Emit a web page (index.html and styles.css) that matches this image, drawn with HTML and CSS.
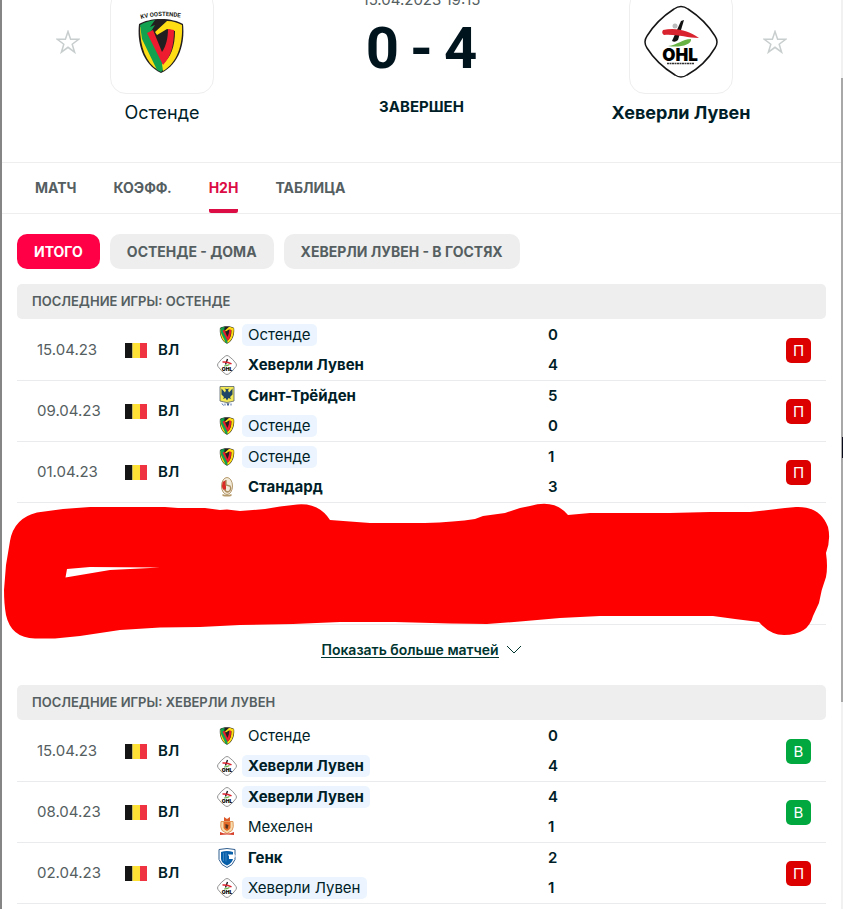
FILE: index.html
```html
<!DOCTYPE html>
<html lang="ru">
<head>
<meta charset="utf-8">
<title>Остенде - Хеверли Лувен</title>
<link rel="stylesheet" href="styles.css">
</head>
<body>
<svg class="defs" aria-hidden="true">
  <symbol id="star" viewBox="0 0 24 24"><path d="M12 1.500l2.600 7.800h8.100l-6.500 4.900 2.400 8-6.600-4.900-6.600 4.900 2.400-8L1.300 9.300h8.100z" fill="none" stroke="#c8cdcd" stroke-width="1.500"/></symbol>
  <symbol id="oostende" viewBox="0 0 48 56">
    <path d="M24 1C15 1 7 3 2 6 0 24 5 46 24 55 43 46 48 24 46 6 41 3 33 1 24 1z" fill="#231f20"/>
    <path d="M3 9l7-4-2 9 13 38C9 45 3 29 3 9z" fill="#ffdd15"/>
    <path d="M3 7c5-3 10-4 15-5l-5 7 5-2-5 8 15 35-4 4-4-2L5 21z" fill="#12a14f"/>
    <path d="M18 14L30 3c6 0 11 2 15 4 1 20-5 38-19 46l-1-7c9-6 13-18 13-33l-8-2-10 6z" fill="#ffdd15"/>
    <path d="M10 15l6-3 9 22c4-6 6-14 6-23l6 1c0 15-3 27-11 35z" fill="#ed1c2e"/>
  </symbol>
  <symbol id="ohl" viewBox="0 0 74 74">
    <path d="M30 4q7-5 14 0Q61 15 71 31q4 6 0 12Q61 60 43 70q-6 4-12 0Q13 59 3 43q-4-6 0-12Q13 15 30 4z" fill="#fff" stroke="#161616" stroke-width="1.500"/>
    <circle cx="31" cy="21" r="2.500" fill="#bbb"/>
    <path d="M37 16l3-1-6 20q-3 3-6 1z" fill="#111"/>
    <path d="M19 25c14-3 26 1 36 8-12 0-22-4-35-3q-3-2-1-5z" fill="#d9232e"/>
    <path d="M24 41c10-1 14-7 23-7 1 6-12 9-23 7z" fill="#69b345"/>
    <text x="36" y="56" text-anchor="middle" class="ohl-name">OHL</text>
    <path d="M23 58.500h27" stroke="#333" stroke-width="1.500" stroke-dasharray="2 .5"/>
  </symbol>
  <symbol id="ohl-small" viewBox="0 0 20 20">
    <path d="M8.500 1q1.500-1 3 0Q16 4 19 8.500q1 1.500 0 3Q16 16 11.500 19q-1.500 1-3 0Q4 16 1 11.500q-1-1.500 0-3Q4 4 8.500 1z" fill="#fff" stroke="#777" stroke-width=".8"/>
    <path d="M10.500 4L8.500 9.500" stroke="#111" stroke-width="1.300"/>
    <path d="M5.500 7q5-.5 9 1.800" stroke="#d9232e" stroke-width="1.500" fill="none"/>
    <path d="M7 11q3 0 5.500-1.500" stroke="#69b345" stroke-width="1.200" fill="none"/>
    <text x="10" y="15.500" text-anchor="middle" class="ohl-mini">OHL</text>
  </symbol>
  <symbol id="stvv" viewBox="0 0 20 20">
    <path d="M3 .5h14V15q-4 1-7 1.500Q7 16 3 15z" fill="#f5ea55" stroke="#54606a" stroke-width=".8"/>
    <path d="M4.500 2.500l3.500 4 1-2.500-1.500-1.500L10 3l2.500-.5L11 4l1 2.500 3.500-4v6L13 11l1 2-2.500-1L10 14.500 8.500 12 6 13l1-2-2.500-2.500z" fill="#1f4566"/>
    <path d="M5 17.500l1.500 2M8 17.500v2M10 17.500l1 2 1-2M14 17.500v2" stroke="#4060a0" stroke-width=".9"/>
  </symbol>
  <symbol id="standard" viewBox="0 0 20 20">
    <ellipse cx="10" cy="9" rx="5.500" ry="8.500" fill="#f3ead9" stroke="#b59a6c" stroke-width="1"/>
    <path d="M5.500 5L9 3v11q-4-1-4-5z" fill="#d92b25"/>
    <path d="M9 3v5l4 1q2 4-2 6-3 0-3-3" fill="none" stroke="#a98d5e" stroke-width="1.300"/>
    <path d="M5.500 17q4.500 2 9 0v2q-4.500 1-9 0z" fill="#b59a6c"/>
  </symbol>
  <symbol id="mechelen" viewBox="0 0 20 20">
    <path d="M7 0l3 2 3-2v4H7z" fill="#dd5a2b"/>
    <path d="M4 4.500h12q1 6-1 9l-5 3-5-3q-2-3-1-9z" fill="#f6ddb0" stroke="#e2995c"/>
    <path d="M6.500 5h7v6q-1 2-3.500 3-2.500-1-3.500-3z" fill="#e46a27"/>
    <path d="M8.500 7l3 1-1 4-2-1z" fill="#52331f"/>
    <path d="M3 15q7 3 14 0v3q-7-1-14 0z" fill="#d6412b"/>
  </symbol>
  <symbol id="genk" viewBox="0 0 20 20">
    <path d="M2 1.500Q10-.5 18 1.500v10q-2 6-8 8-6-2-8-8z" fill="#fff" stroke="#315f91" stroke-width="1"/>
    <path d="M4 4q6-2 12 0v3h-4v4h4q-1 4-6 6.500Q4.500 15 4 11z" fill="#075ea9"/>
    <path d="M11 7h7v2h-5v2" fill="none" stroke="#fff" stroke-width="1"/>
    <path d="M6.500 5v8M9 4.500v9" stroke="#4a91cc" stroke-width=".8"/>
  </symbol>
  <symbol id="flag" viewBox="0 0 22 15"><path d="M0 0h7.500v15H0z" fill="#151515"/><path d="M7.500 0H15v15H7.500z" fill="#ffe135"/><path d="M15 0h7v15h-7z" fill="#ef3340"/></symbol>
</svg>

<div class="page">
  <header class="match">
    <button class="star" aria-label="В избранное"><svg><use href="#star"/></svg></button>
    <a class="team" href="#">
      <span class="crest">
        <svg class="crest-oostende" viewBox="0 0 50 66">
          <path id="arc" d="M4 10Q25 4 50 10" fill="none"/>
          <text class="kv"><textPath href="#arc">KV OOSTENDE</textPath></text>
          <use href="#oostende" x="0" y="9" width="48" height="56"/>
        </svg>
      </span>
      <span>Остенде</span>
    </a>
    <div class="result">
      <div class="when">15.04.2023 19:15</div>
      <div class="score"><span>0</span><span>-</span><span>4</span></div>
      <div class="status">ЗАВЕРШЕН</div>
    </div>
    <a class="team winner" href="#">
      <span class="crest"><svg class="crest-ohl"><use href="#ohl"/></svg></span>
      <span>Хеверли Лувен</span>
    </a>
    <button class="star" aria-label="В избранное"><svg><use href="#star"/></svg></button>
  </header>

  <nav class="tabs">
    <a href="#">МАТЧ</a>
    <a href="#">КОЭФФ.</a>
    <a href="#" class="active">H2H</a>
    <a href="#">ТАБЛИЦА</a>
  </nav>

  <main>
    <div class="filters">
      <button class="active">ИТОГО</button>
      <button>ОСТЕНДЕ - ДОМА</button>
      <button>ХЕВЕРЛИ ЛУВЕН - В ГОСТЯХ</button>
    </div>

    <section>
      <h2>ПОСЛЕДНИЕ ИГРЫ: ОСТЕНДЕ</h2>
      <table>
        <colgroup><col class="c-date"><col class="c-league"><col><col class="c-goals"><col class="c-form"></colgroup>
        <tr>
          <td class="date">15.04.23</td>
          <td><span class="league"><svg><use href="#flag"/></svg>ВЛ</span></td>
          <td><div class="side"><svg class="narrow"><use href="#oostende"/></svg><span class="name own">Остенде</span></div><div class="side won"><svg><use href="#ohl-small"/></svg><span class="name">Хеверли Лувен</span></div></td>
          <td class="goals"><div>0</div><div>4</div></td>
          <td><span class="form loss">П</span></td>
        </tr>
        <tr>
          <td class="date">09.04.23</td>
          <td><span class="league"><svg><use href="#flag"/></svg>ВЛ</span></td>
          <td><div class="side won"><svg><use href="#stvv"/></svg><span class="name">Синт-Трёйден</span></div><div class="side"><svg class="narrow"><use href="#oostende"/></svg><span class="name own">Остенде</span></div></td>
          <td class="goals"><div>5</div><div>0</div></td>
          <td><span class="form loss">П</span></td>
        </tr>
        <tr>
          <td class="date">01.04.23</td>
          <td><span class="league"><svg><use href="#flag"/></svg>ВЛ</span></td>
          <td><div class="side"><svg class="narrow"><use href="#oostende"/></svg><span class="name own">Остенде</span></div><div class="side won"><svg><use href="#standard"/></svg><span class="name">Стандард</span></div></td>
          <td class="goals"><div>1</div><div>3</div></td>
          <td><span class="form loss">П</span></td>
        </tr>
      </table>
      <div class="covered">
        <svg viewBox="4 503 826 136" preserveAspectRatio="none" aria-hidden="true">
          <path fill="red" fill-rule="evenodd" d="M37 512.500L63 509Q76 508 90 507L165 507 178 508H205L220 510 227 509.500 240 511 265 509 280 506.500 293 505Q318 501 330 520L370 523H425Q455 522 475 519L483 516 505 513 520 508 530 506Q555 499 568 515L590 513H670L710 512H750L785 508 796 507Q820 506 828 527Q831 540 826 553Q828 567 826 577Q821 590 819 603L813 616Q808 635 784 635Q770 635 759 622L735 619 713 616H600L560 618 520 621.500 487 624 450 623.500 395 622H340L293 624 240 625 200 627 160 627.500 120 630 80 636 55 638.500H35Q11 638 6 615Q4 604 4 590L6 565 10 541Q14 518 37 512.500zM67 569L65.500 577.500 110 570 160 567.500 90 567z"/>
        </svg>
      </div>
      <a class="more" href="#"><span>Показать больше матчей</span><svg viewBox="0 0 16 10"><path d="M1 1l7 7 7-7" fill="none" stroke="#00352f"/></svg></a>
    </section>

    <section>
      <h2>ПОСЛЕДНИЕ ИГРЫ: ХЕВЕРЛИ ЛУВЕН</h2>
      <table>
        <colgroup><col class="c-date"><col class="c-league"><col><col class="c-goals"><col class="c-form"></colgroup>
        <tr>
          <td class="date">15.04.23</td>
          <td><span class="league"><svg><use href="#flag"/></svg>ВЛ</span></td>
          <td><div class="side"><svg class="narrow"><use href="#oostende"/></svg><span class="name">Остенде</span></div><div class="side won"><svg><use href="#ohl-small"/></svg><span class="name own">Хеверли Лувен</span></div></td>
          <td class="goals"><div>0</div><div>4</div></td>
          <td><span class="form win">В</span></td>
        </tr>
        <tr>
          <td class="date">08.04.23</td>
          <td><span class="league"><svg><use href="#flag"/></svg>ВЛ</span></td>
          <td><div class="side won"><svg><use href="#ohl-small"/></svg><span class="name own">Хеверли Лувен</span></div><div class="side"><svg><use href="#mechelen"/></svg><span class="name">Мехелен</span></div></td>
          <td class="goals"><div>4</div><div>1</div></td>
          <td><span class="form win">В</span></td>
        </tr>
        <tr>
          <td class="date">02.04.23</td>
          <td><span class="league"><svg><use href="#flag"/></svg>ВЛ</span></td>
          <td><div class="side won"><svg><use href="#genk"/></svg><span class="name">Генк</span></div><div class="side"><svg><use href="#ohl-small"/></svg><span class="name own">Хеверли Лувен</span></div></td>
          <td class="goals"><div>2</div><div>1</div></td>
          <td><span class="form loss">П</span></td>
        </tr>
        <tr>
          <td></td><td></td>
          <td><div class="side"><svg></svg><span class="name own next"></span></div></td>
          <td></td><td></td>
        </tr>
      </table>
    </section>
  </main>
</div>
<div class="scrollbar"><div class="thumb"></div><div class="mark"></div></div>
</body>
</html>
```
FILE: styles.css
```css
* { box-sizing: border-box; }
body {
  margin: 0;
  height: 100vh;
  overflow: hidden;
  display: flex;
  background: #fff;
  color: #001e28;
  font: 15px/20px Inter, sans-serif;
}
a { color: inherit; text-decoration: none; }
button { border: 0; background: none; padding: 0; font: inherit; color: inherit; cursor: pointer; }
svg { display: block; }
.defs { position: absolute; width: 0; height: 0; }
.page {
  flex: 1;
  min-width: 0;
  border-left: 2px solid #858585;
}

/* Match header */
.match {
  display: grid;
  grid-template-columns: 24px 164px 1fr 164px 24px;
  margin-top: -10px;
  padding: 0 54px;
  height: 173px;
  border-bottom: 1px solid #eee;
}
.star { align-self: start; margin-top: 40px; }
.star svg { width: 24px; height: 24px; }
.team {
  display: flex;
  flex-direction: column;
  align-items: center;
  gap: 7px;
  font-size: 18px;
  line-height: 24px;
  white-space: nowrap;
}
.winner { font-weight: 700; }
.crest {
  display: grid;
  place-items: center;
  width: 104px;
  height: 104px;
  border: 1px solid #eee;
  border-radius: 16px;
}
.crest-oostende { width: 50px; height: 66px; overflow: visible; }
.crest-ohl { width: 74px; height: 74px; }
.kv { font: 700 6px Roboto, sans-serif; fill: #231f20; }
.ohl-name { font: 900 17px Inter, sans-serif; fill: #000; }
.ohl-mini { font: 900 5px Inter, sans-serif; fill: #000; }
.result { text-align: center; }
.when { color: #555e61; line-height: 20px; }
.score {
  display: flex;
  justify-content: center;
  gap: 11px;
  margin-top: 8px;
  color: #00141e;
  font: 700 58px/60px Roboto, sans-serif;
}
.status { margin-top: 18px; font-size: 15px; font-weight: 700; line-height: 22px; }

/* Tabs */
.tabs {
  display: flex;
  gap: 37px;
  height: 51px;
  padding: 0 33px;
  border-bottom: 1px solid #eee;
  color: #555e61;
  font-size: 14px;
  font-weight: 700;
}
.tabs a { padding-top: 15px; }
.tabs .active { color: #dc0c45; border-bottom: 4px solid #dc0c45; border-radius: 2px; }

main { padding: 20px 15px 0; }
.filters { display: flex; gap: 10px; margin-bottom: 15px; }
.filters button {
  height: 35px;
  padding: 0 17px;
  border-radius: 10px;
  background: #eee;
  color: #555e61;
  font-size: 14px;
  font-weight: 700;
  white-space: nowrap;
}
.filters .active { background: #ff0046; color: #fff; }

/* Recent games */
h2 {
  margin: 0 0 1px;
  padding: 0 15px;
  border-radius: 5px;
  background: #eee;
  color: #555e61;
  font-size: 13px;
  font-weight: 600;
  line-height: 35px;
}
table { width: 100%; table-layout: fixed; border-collapse: separate; border-spacing: 0; }
.c-date { width: 108px; }
.c-league { width: 92px; }
.c-goals { width: 150px; }
.c-form { width: 128px; }
td { height: 61px; padding: 0; border-bottom: 1px solid #e9ebec; }
.date { padding-left: 20px; color: #555e61; }
.league { display: flex; align-items: center; gap: 11px; font-weight: 600; }
.league svg { width: 22px; height: 15px; }
.side { display: flex; align-items: center; gap: 5px; height: 30px; }
.side svg { width: 20px; height: 20px; }
.side .narrow { padding: 1px 2px; }
.name { padding: 0 6px; border-radius: 5px; line-height: 22px; }
.own { background: #ecf5ff; }
.next { width: 124px; height: 22px; }
.won { font-weight: 700; }
.goals { font-weight: 600; line-height: 30px; }
.form {
  display: block;
  width: 25px;
  margin-left: auto;
  margin-right: 15px;
  border-radius: 5px;
  color: #fff;
  line-height: 25px;
  text-align: center;
}
.loss { background: #dc0000; }
.win { background: #00a83f; }

.covered { position: relative; height: 122px; border-bottom: 1px solid #e9ebec; }
.covered svg { position: absolute; top: 0; left: -13px; width: calc(100% + 17px); height: 136px; pointer-events: none; }
.more {
  display: flex;
  justify-content: center;
  align-items: center;
  gap: 7px;
  height: 50px;
  margin-bottom: 10px;
  color: #00352f;
  font-size: 14px;
  font-weight: 600;
}
.more span { border-bottom: 1px solid #00352f; line-height: 15px; }
.more svg { width: 16px; height: 10px; }

/* Window edge */
.scrollbar { position: relative; width: 2px; padding-top: 78px; background: #f1f1f1; }
.thumb { height: 624px; background: #a8a8a8; }
.mark { position: absolute; top: 437px; right: 0; width: 1px; height: 21px; background: #0a0a1a; }
```
